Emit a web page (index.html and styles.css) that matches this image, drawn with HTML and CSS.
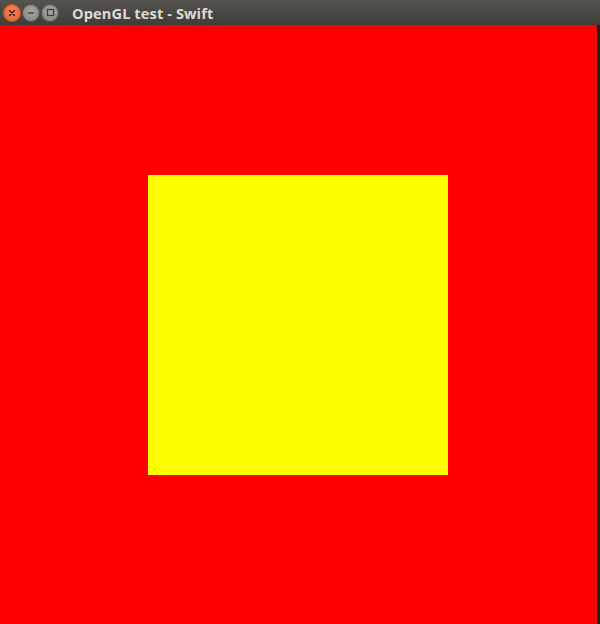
FILE: index.html
```html
<!DOCTYPE html>
<html>
<head>
<meta charset="utf-8">
<link rel="stylesheet" href="styles.css">
</head>
<body>
<div class="window">
  <div class="titlebar">
    <div class="buttons">
      <span class="btn close">
        <svg width="8" height="8" viewBox="0 0 8 8"><path d="M1.5 1.5L6.5 6.5M6.5 1.5L1.5 6.5" stroke="#3a1a0a" stroke-width="1.3" stroke-linecap="round"/></svg>
      </span>
      <span class="btn">
        <svg width="8" height="8" viewBox="0 0 8 8"><path d="M1 4H7" stroke="#3c3b37" stroke-width="1.3"/></svg>
      </span>
      <span class="btn">
        <svg width="9" height="9" viewBox="0 0 9 9"><rect x="1.5" y="1.5" width="6" height="6" fill="none" stroke="#3c3b37" stroke-width="1.2"/></svg>
      </span>
    </div>
    <div class="title">OpenGL test - Swift</div>
  </div>
  <div class="content">
    <div class="canvas">
      <div class="square"></div>
    </div>
    <div class="edge"></div>
  </div>
</div>
</body>
</html>
```
FILE: styles.css
```css
html, body {
  margin: 0;
  padding: 0;
  width: 600px;
  height: 624px;
  overflow: hidden;
  background: #ff0000;
}
.window {
  display: flex;
  flex-direction: column;
  width: 600px;
  height: 624px;
}
.titlebar {
  height: 25px;
  flex: none;
  display: flex;
  align-items: center;
  background: linear-gradient(#55534e, #3e3d39);
}
.buttons {
  display: flex;
  gap: 1px;
  padding-left: 3px;
}
.btn {
  width: 18px;
  height: 18px;
  border-radius: 50%;
  display: flex;
  align-items: center;
  justify-content: center;
  background: radial-gradient(circle at 50% 40%, #a8a7a2, #7d7c78);
  box-shadow: inset 0 0 0 1px #4a4945;
}
.btn.close {
  background: radial-gradient(circle at 50% 40%, #f58a5c, #de5a26);
  box-shadow: inset 0 0 0 1px #b8471c;
}
.title {
  margin-left: 13px;
  color: #dfdbd2;
  font-family: "Open Sans", "DejaVu Sans", sans-serif;
  font-weight: 700;
  font-size: 14.6px;
  letter-spacing: 0.1px;
}
.content {
  flex: 1;
  display: flex;
}
.canvas {
  flex: 1;
  background: #ff0000;
  padding-top: 150px;
  padding-left: 148px;
}
.square {
  width: 300px;
  height: 300px;
  background: #ffff00;
}
.edge {
  width: 3px;
  background: #1e2320;
}
```
